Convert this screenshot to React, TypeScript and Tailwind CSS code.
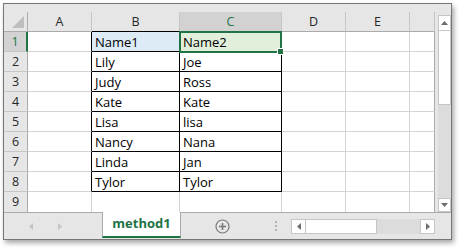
import React from "react";

const cols = ["A", "B", "C", "D", "E", ""];
const names: [string, string][] = [
  ["Name1", "Name2"],
  ["Lily", "Joe"],
  ["Judy", "Ross"],
  ["Kate", "Kate"],
  ["Lisa", "lisa"],
  ["Nancy", "Nana"],
  ["Linda", "Jan"],
  ["Tylor", "Tylor"],
];

const Tri = ({ dir, color }: { dir: "up" | "down" | "left" | "right"; color: string }) => {
  const pts = {
    up: "0,4 7,4 3.5,0",
    down: "0,0 7,0 3.5,4",
    left: "4,0 4,7 0,3.5",
    right: "0,0 0,7 4,3.5",
  }[dir];
  const w = dir === "up" || dir === "down" ? 7 : 4;
  const h = dir === "up" || dir === "down" ? 4 : 7;
  return (
    <svg width={w} height={h} viewBox={`0 0 ${w} ${h}`}>
      <polygon points={pts} fill={color} />
    </svg>
  );
};

const App = () => {
  const rows = Array.from({ length: 9 }, (_, i) => i + 1);
  return (
    <div className="w-[461px] h-[251px] bg-white pt-[3px] pl-[3px] font-['Open_Sans',sans-serif]">
      <div className="w-[449px] h-[237px] border border-[#767676] bg-[#e6e6e6] shadow-[2px_3px_5px_rgba(0,0,0,0.35)] flex flex-col">
        <div className="flex h-[208px]">
          <div className="w-[431px] flex flex-col">
            <div className="h-[9px]" />
            <div className="relative grid grid-cols-[24px_64px_88px_102px_64px_64px_25px] bg-white">
              {/* header row */}
              <div className="h-[20px] bg-[#e6e6e6] border-r border-b border-[#ababab] flex items-end justify-end pr-[3px] pb-[3px]">
                <svg width="12" height="12" viewBox="0 0 12 12">
                  <polygon points="12,0 12,12 0,12" fill="#bfbfbf" />
                </svg>
              </div>
              {cols.map((c, i) => (
                <div
                  key={"h" + i}
                  className={`h-[20px] border-r border-b text-[12.5px] leading-[20px] text-center ${
                    c === "C"
                      ? "bg-[#d2d2d2] text-[#217346] border-r-[#c6c6c6] border-b-[#217346]"
                      : c === "B"
                      ? "bg-[#e6e6e6] text-[#262626] border-r-[#c6c6c6] border-b-black"
                      : "bg-[#e6e6e6] text-[#262626] border-r-[#c6c6c6] border-b-[#ababab]"
                  }`}
                >
                  {c}
                </div>
              ))}
              {rows.map((r) => {
                const inTable = r <= 8;
                const last = r === 9;
                return (
                  <React.Fragment key={r}>
                    <div
                      className={`h-[20px] text-[12.5px] leading-[20px] text-center ${
                        last ? "" : "border-b border-b-[#c6c6c6]"
                      } ${
                        r === 1
                          ? "bg-[#d2d2d2] text-[#217346] border-r-2 border-r-[#217346]"
                          : "bg-[#e6e6e6] text-[#262626] border-r border-r-[#ababab]"
                      }`}
                    >
                      {r}
                    </div>
                    {/* A */}
                    <div
                      className={`h-[20px] border-r ${last ? "" : "border-b"} border-b-[#d4d4d4] ${
                        inTable ? "border-r-black" : "border-r-[#d4d4d4]"
                      }`}
                    />
                    {/* B, C */}
                    {[0, 1].map((k) => (
                      <div
                        key={k}
                        className={`h-[20px] border-r ${last ? "" : "border-b"} pl-[3px] text-[13px] leading-[20px] text-black whitespace-nowrap ${
                          inTable ? "border-black" : "border-[#d4d4d4]"
                        } ${r === 1 ? (k === 0 ? "bg-[#ddebf7]" : "bg-[#e2efda]") : ""}`}
                      >
                        {inTable ? names[r - 1][k] : ""}
                      </div>
                    ))}
                    <div className={`h-[20px] border-r ${last ? "" : "border-b"} border-[#d4d4d4]`} />
                    <div className={`h-[20px] border-r ${last ? "" : "border-b"} border-[#d4d4d4]`} />
                    <div className={`h-[20px] border-r ${last ? "" : "border-b"} border-b-[#d4d4d4] border-r-[#ababab]`} />
                  </React.Fragment>
                );
              })}
              {/* active cell */}
              <div className="absolute left-[175px] top-[19px] w-[103px] h-[22px] border-2 border-[#217346]" />
              <div className="absolute left-[274px] top-[37px] w-[5px] h-[5px] bg-[#217346] outline outline-1 outline-white" />
            </div>
          </div>
          {/* vertical scrollbar */}
          <div className="ml-[3px] mt-[11px] w-[13px] h-[197px] flex flex-col">
            <div className="h-[16px] bg-white border border-[#c6c6c6] flex items-center justify-center">
              <Tri dir="up" color="#6d6d6d" />
            </div>
            <div className="h-[74px] bg-white border border-t-0 border-[#c6c6c6]" />
            <div className="flex-1 bg-[#dcdcdc]" />
            <div className="h-[14px] bg-white border border-[#c6c6c6] flex items-center justify-center">
              <Tri dir="down" color="#6d6d6d" />
            </div>
          </div>
        </div>
        {/* sheet tabs bar */}
        <div className="h-[27px] border-t border-[#ababab] flex items-start">
          <div className="w-[98px] h-full flex items-center pl-[25px] gap-[25px]">
            <Tri dir="left" color="#c4c4c4" />
            <Tri dir="right" color="#c4c4c4" />
          </div>
          <div className="-mt-px w-[79px] h-[26px] bg-white border-x border-[#ababab] border-b-2 border-b-[#217346] flex items-center justify-center text-[13px] font-bold text-[#217346]">
            method1
          </div>
          <div className="h-full flex items-center">
            <svg className="ml-[34px]" width="15" height="15" viewBox="0 0 15 15">
              <circle cx="7.5" cy="7.5" r="6.5" fill="none" stroke="#7a7a7a" strokeWidth="1.2" />
              <path d="M7.5 4v7M4 7.5h7" stroke="#7a7a7a" strokeWidth="1.6" />
            </svg>
            <svg className="ml-[45px]" width="2" height="10" viewBox="0 0 2 10">
              <rect x="0" y="0" width="2" height="2" fill="#b4b4b4" />
              <rect x="0" y="4" width="2" height="2" fill="#b4b4b4" />
              <rect x="0" y="8" width="2" height="2" fill="#b4b4b4" />
            </svg>
            <div className="ml-[14px] w-[144px] h-[15px] flex">
              <div className="w-[15px] h-full bg-white border border-[#c6c6c6] flex items-center justify-center">
                <Tri dir="left" color="#6d6d6d" />
              </div>
              <div className="w-[71px] h-full bg-white border border-l-0 border-[#c6c6c6]" />
              <div className="flex-1 bg-[#dcdcdc]" />
              <div className="w-[15px] h-full bg-white border border-[#c6c6c6] flex items-center justify-center">
                <Tri dir="right" color="#6d6d6d" />
              </div>
            </div>
          </div>
        </div>
      </div>
    </div>
  );
};

export default App;
